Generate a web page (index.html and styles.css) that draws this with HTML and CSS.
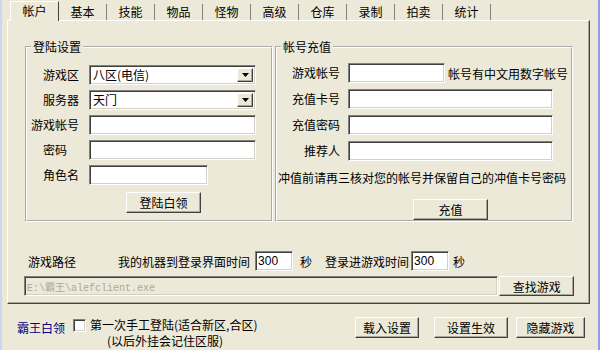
FILE: index.html
```html
<!DOCTYPE html>
<html lang="zh-CN">
<head>
    <meta charset="UTF-8">
    <title>霸王白领</title>
    <link rel="stylesheet" href="styles.css">
</head>
<body>
    <div class="window">
        <div class="tabs">
            <div class="tab active">帐户</div>
            <div class="tab">基本</div>
            <div class="tab">技能</div>
            <div class="tab">物品</div>
            <div class="tab">怪物</div>
            <div class="tab">高级</div>
            <div class="tab">仓库</div>
            <div class="tab">录制</div>
            <div class="tab">拍卖</div>
            <div class="tab">统计</div>
        </div>

        <div class="panel">
            <div class="groups">
                <!-- 登陆设置 -->
                <fieldset class="group group-login">
                    <legend>登陆设置</legend>
                    <div class="form form-login">
                        <div class="row">
                            <label>游戏区</label>
                            <div class="combo">
                                <span class="combo-text">八区(电信)</span>
                                <span class="combo-btn"><svg width="7" height="4" viewBox="0 0 7 4"><path d="M0 0h7L3.5 4z" fill="#000"/></svg></span>
                            </div>
                        </div>
                        <div class="row">
                            <label>服务器</label>
                            <div class="combo">
                                <span class="combo-text">天门</span>
                                <span class="combo-btn"><svg width="7" height="4" viewBox="0 0 7 4"><path d="M0 0h7L3.5 4z" fill="#000"/></svg></span>
                            </div>
                        </div>
                        <div class="row">
                            <label>游戏帐号</label>
                            <input class="field field-long" type="text">
                        </div>
                        <div class="row">
                            <label class="short">密码</label>
                            <input class="field field-long" type="password">
                        </div>
                        <div class="row">
                            <label>角色名</label>
                            <input class="field field-mid" type="text">
                        </div>
                        <button class="btn btn-login">登陆白领</button>
                    </div>
                </fieldset>

                <!-- 帐号充值 -->
                <fieldset class="group group-charge">
                    <legend>帐号充值</legend>
                    <div class="form form-charge">
                        <div class="row">
                            <label>游戏帐号</label>
                            <input class="field field-small" type="text">
                            <span class="hint">帐号有中文用数字帐号</span>
                        </div>
                        <div class="row">
                            <label>充值卡号</label>
                            <input class="field field-wide" type="text">
                        </div>
                        <div class="row">
                            <label>充值密码</label>
                            <input class="field field-wide" type="text">
                        </div>
                        <div class="row">
                            <label>推荐人</label>
                            <input class="field field-wide" type="text">
                        </div>
                        <p class="note">冲值前请再三核对您的帐号并保留自己的冲值卡号密码</p>
                        <button class="btn btn-charge">充值</button>
                    </div>
                </fieldset>
            </div>

            <div class="path-row">
                <span class="path-label">游戏路径</span>
                <span class="time-label">我的机器到登录界面时间</span>
                <input class="field field-num" type="text" value="300">
                <span class="unit">秒</span>
                <span class="time-label2">登录进游戏时间</span>
                <input class="field field-num num2" type="text" value="300">
                <span class="unit unit2">秒</span>
            </div>
            <div class="path-row2">
                <input class="field field-path" type="text" value="E:\霸王\alefclient.exe" disabled>
                <button class="btn btn-find">查找游戏</button>
            </div>
        </div>

        <div class="footer">
            <span class="brand">霸王白领</span>
            <input class="check" type="checkbox">
            <div class="first-login">
                <span>第一次手工登陆(适合新区,合区)</span>
                <span class="sub">(以后外挂会记住区服)</span>
            </div>
            <div class="actions">
                <button class="btn btn-load">载入设置</button>
                <button class="btn btn-apply">设置生效</button>
                <button class="btn btn-hide">隐藏游戏</button>
            </div>
        </div>
    </div>
</body>
</html>
```

FILE: styles.css
```css
body {
    margin: 0;
    background: #ece9d8;
    font-family: "Noto Sans CJK SC", "Liberation Sans", sans-serif;
    font-size: 12px;
    color: #000;
}

.window {
    width: 600px;
    height: 350px;
    box-sizing: border-box;
    border-left: 2px solid #cdd6f3;
    border-right: 2px solid #8e9ee0;
    overflow: hidden;
}

/* tab strip */
.tabs {
    display: flex;
    align-items: flex-end;
    height: 20px;
    padding-left: 8px;
}

.tab {
    width: 47px;
    height: 16px;
    line-height: 16px;
    text-align: center;
    border-right: 1px solid #808080;
}

.tab.active {
    position: relative;
    z-index: 1;
    width: 47px;
    height: 19px;
    line-height: 17px;
    margin-bottom: -1px;
    background: #ece9d8;
    border: 1px solid #fff;
    border-right-color: #404040;
    border-bottom: none;
}

/* tab page */
.panel {
    margin-left: 5px;
    width: 583px;
    height: 284px;
    box-sizing: border-box;
    border: 1px solid;
    border-color: #fff #404040 #404040 #fff;
    box-shadow: inset -1px -1px #aca899;
    padding: 19px 15px 0 17px;
}

.groups {
    display: flex;
    gap: 2px;
}

.group {
    margin: 0;
    padding: 0;
    min-width: 0;
    height: 182px;
    box-sizing: border-box;
    border: 2px groove #fff;
}

.group legend {
    margin-left: 4px;
    padding: 0 2px;
    line-height: 14px;
}

.group-login {
    width: 248px;
}

.group-charge {
    width: 298px;
}

.form {
    display: flex;
    flex-direction: column;
}

.form-login {
    padding-top: 11px;
    gap: 5px;
}

.form-charge {
    padding-top: 9px;
    gap: 6px;
}

.row {
    display: flex;
    align-items: center;
    height: 20px;
}

.row label {
    text-align: right;
    line-height: 14px;
}

.form-login label {
    width: 52px;
    margin-right: 10px;
}

.form-login label.short {
    width: 40px;
    margin-right: 22px;
}

.form-charge label {
    width: 63px;
    margin-right: 8px;
}

/* sunken edit box */
.field {
    height: 20px;
    box-sizing: border-box;
    margin: 0;
    padding: 0 2px;
    background: #fff;
    border: 1px solid;
    border-color: #808080 #fff #fff #808080;
    box-shadow: inset 1px 1px #404040, inset -1px -1px #d4d0c8;
    font: inherit;
    outline: none;
}

.field-long { width: 167px; }
.field-mid { width: 119px; }
.field-small { width: 97px; }
.field-wide { width: 205px; }

.combo {
    display: flex;
    width: 167px;
    height: 20px;
    box-sizing: border-box;
    padding: 2px;
    background: #fff;
    border: 1px solid;
    border-color: #808080 #fff #fff #808080;
    box-shadow: inset 1px 1px #404040, inset -1px -1px #d4d0c8;
}

.combo-text {
    flex: 1;
    line-height: 14px;
    padding-left: 1px;
}

.combo-btn {
    display: flex;
    align-items: center;
    justify-content: center;
    width: 16px;
    box-sizing: border-box;
    background: #ece9d8;
    border: 1px solid;
    border-color: #fff #404040 #404040 #fff;
    box-shadow: inset -1px -1px #aca899;
}

.hint {
    margin-left: 3px;
    white-space: nowrap;
}

.note {
    margin: 4px 0 0 1px;
    line-height: 14px;
    white-space: nowrap;
}

/* raised push button */
.btn {
    height: 21px;
    box-sizing: border-box;
    margin: 0;
    padding: 0;
    background: #ece9d8;
    border: 1px solid;
    border-color: #fff #404040 #404040 #fff;
    box-shadow: inset -1px -1px #aca899;
    font: inherit;
    line-height: 17px;
    text-align: center;
    color: #000;
}

.btn-login {
    width: 75px;
    margin: 2px 0 0 99px;
}

.btn-charge {
    width: 75px;
    margin: 8px 0 0 136px;
}

/* path area */
.path-row {
    display: flex;
    align-items: center;
    height: 20px;
    margin-top: 29px;
    white-space: nowrap;
}

.path-label {
    margin-left: 3px;
}

.time-label {
    margin-left: 42px;
}

.field-num {
    width: 38px;
    margin-left: 5px;
    font-family: "Liberation Sans", sans-serif;
}

.num2 {
    margin-left: 2px;
}

.unit {
    margin-left: 7px;
}

.time-label2 {
    margin-left: 13px;
}

.unit2 {
    margin-left: 4px;
}

.path-row2 {
    display: flex;
    margin-top: 5px;
}

.field-path {
    width: 477px;
    margin-left: -1px;
    background: #ece9d8;
    color: #aca899;
    font-family: "Liberation Mono", "Noto Sans CJK SC", monospace;
    font-size: 10px;
}

.btn-find {
    width: 75px;
    height: 20px;
    margin-left: 1px;
}

/* bottom bar */
.footer {
    display: flex;
    align-items: flex-start;
    margin-top: 13px;
    padding: 0 13px 0 15px;
}

.brand {
    color: #000080;
    margin-top: 4px;
    line-height: 14px;
}

.check {
    appearance: none;
    width: 13px;
    height: 13px;
    margin: 2px 4px 0 8px;
    box-sizing: border-box;
    background: #fff;
    border: 1px solid;
    border-color: #808080 #fff #fff #808080;
    box-shadow: inset 1px 1px #404040, inset -1px -1px #d4d0c8;
}

.first-login {
    display: flex;
    flex-direction: column;
    line-height: 16px;
    white-space: nowrap;
}

.first-login .sub {
    padding-left: 17px;
}

.actions {
    display: flex;
    margin-left: auto;
}

.btn-load { width: 64px; }
.btn-apply { width: 74px; margin-left: 15px; }
.btn-hide { width: 69px; margin-left: 8px; }
```
